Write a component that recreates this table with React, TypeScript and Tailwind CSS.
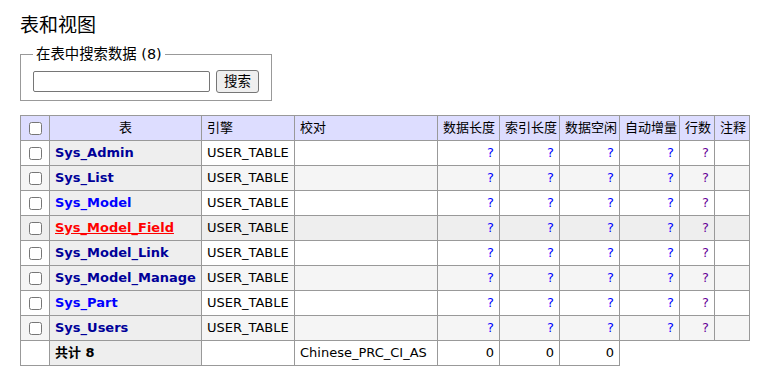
const rows = [
  { name: "Sys_Admin", color: "text-[#000099]" },
  { name: "Sys_List", color: "text-[#000099]" },
  { name: "Sys_Model", color: "text-[#0000ff]" },
  { name: "Sys_Model_Field", color: "text-[#ff0000] underline", hover: true },
  { name: "Sys_Model_Link", color: "text-[#000099]" },
  { name: "Sys_Model_Manage", color: "text-[#000099]" },
  { name: "Sys_Part", color: "text-[#0000ff]" },
  { name: "Sys_Users", color: "text-[#000099]" },
];

const headers = ["数据长度", "索引长度", "数据空闲", "自动增量", "行数"];

const cell = "border border-[#999] px-[5px] h-[25px] whitespace-nowrap";

export default function App() {
  return (
    <div
      className="min-h-screen bg-white text-black pl-5 pt-[12px] text-[14px]"
      style={{ fontFamily: '"DejaVu Sans", Verdana, "Noto Sans CJK SC", sans-serif' }}
    >
      <h2 className="text-[19px] font-normal leading-[26px] mb-[7px]">表和视图</h2>

      <fieldset className="border border-[#999] w-[250px] px-3 pb-[7px] pt-0">
        <legend className="px-[3px] text-[14.4px] leading-[18px]">在表中搜索数据 (8)</legend>
        <div className="flex items-center gap-[6px] mt-[7px]">
          <input
            type="text"
            className="w-[177px] h-[21px] border border-[#767676] rounded-[2px] bg-white"
          />
          <button className="h-[23px] w-[43px] border border-[#767676] rounded-[3px] bg-[#efefef] text-[13.5px] leading-none">
            搜索
          </button>
        </div>
      </fieldset>

      <table className="table-fixed border-collapse w-[730px] mt-[14px] text-[13px] leading-[16px]">
        <colgroup>
          <col className="w-[29px]" />
          <col className="w-[152px]" />
          <col className="w-[93px]" />
          <col className="w-[143px]" />
          <col className="w-[62px]" />
          <col className="w-[60px]" />
          <col className="w-[60px]" />
          <col className="w-[60px]" />
          <col className="w-[35px]" />
          <col className="w-[35px]" />
        </colgroup>
        <thead>
          <tr className="bg-[#ddddff]">
            <td className={`${cell} text-center`}>
              <input type="checkbox" className="align-middle" />
            </td>
            <th className={`${cell} font-normal text-center`}>表</th>
            <td className={cell}>引擎</td>
            <td className={cell}>校对</td>
            {headers.map((h) => (
              <td key={h} className={cell}>
                {h}
              </td>
            ))}
            <td className={cell}>注释</td>
          </tr>
        </thead>
        <tbody>
          {rows.map((r, i) => {
            const bg = r.hover ? "bg-[#eeeeee]" : i % 2 === 1 ? "bg-[#f5f5f5]" : "bg-white";
            return (
              <tr key={r.name} className={bg}>
                <td className={`${cell} text-center`}>
                  <input type="checkbox" className="align-middle" />
                </td>
                <th className={`${cell} bg-[#eeeeee] text-left`}>
                  <a className={`font-bold ${r.color}`}>{r.name}</a>
                </th>
                <td className={cell}>USER_TABLE</td>
                <td className={cell}></td>
                {[0, 1, 2, 3].map((k) => (
                  <td key={k} className={`${cell} text-right`}>
                    <a className="text-[#0000ff]">?</a>
                  </td>
                ))}
                <td className={`${cell} text-right`}>
                  <a className="text-[#660099]">?</a>
                </td>
                <td className={cell}></td>
              </tr>
            );
          })}
          <tr>
            <td className={cell}></td>
            <th className={`${cell} bg-[#eeeeee] text-left font-bold`}>共计 8</th>
            <td className={cell}></td>
            <td className={cell}>Chinese_PRC_CI_AS</td>
            <td className={`${cell} text-right`}>0</td>
            <td className={`${cell} text-right`}>0</td>
            <td className={`${cell} text-right`}>0</td>
          </tr>
        </tbody>
      </table>
    </div>
  );
}
